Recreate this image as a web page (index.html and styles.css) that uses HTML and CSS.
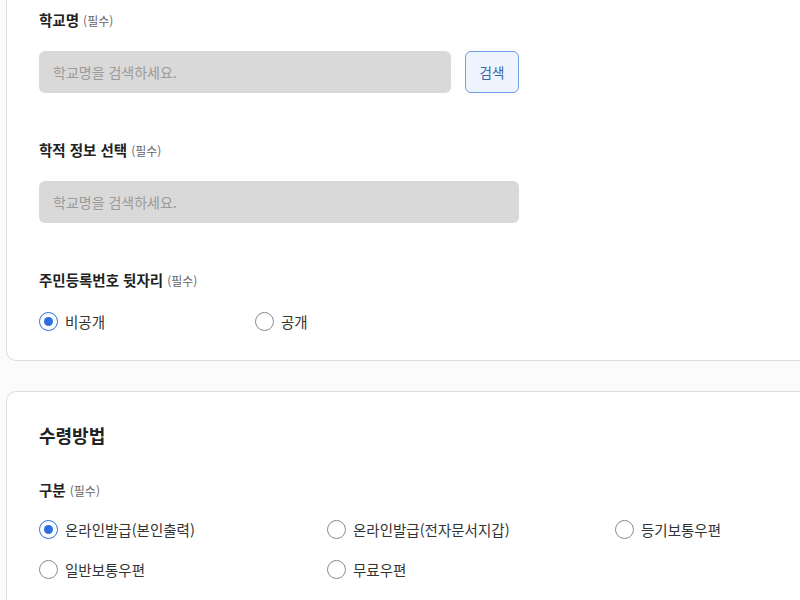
FILE: index.html
```html
<!DOCTYPE html>
<html lang="ko">
<head>
<meta charset="utf-8">
<link rel="stylesheet" href="styles.css">
</head>
<body>
<div class="page">
  <section class="card card-top">
    <div class="field">
      <div class="label">학교명 <span class="req">(필수)</span></div>
      <div class="search-row">
        <div class="input w-short">학교명을 검색하세요.</div>
        <button class="btn">검색</button>
      </div>
    </div>
    <div class="field">
      <div class="label">학적 정보 선택 <span class="req">(필수)</span></div>
      <div class="input w-long">학교명을 검색하세요.</div>
    </div>
    <div class="field">
      <div class="label">주민등록번호 뒷자리 <span class="req">(필수)</span></div>
      <div class="radios radios-2">
        <label class="radio"><span class="dot checked"></span>비공개</label>
        <label class="radio"><span class="dot"></span>공개</label>
      </div>
    </div>
  </section>
  <section class="card card-bottom">
    <h2 class="title">수령방법</h2>
    <div class="field">
      <div class="label">구분 <span class="req">(필수)</span></div>
      <div class="radios radios-3">
        <label class="radio"><span class="dot checked"></span>온라인발급(본인출력)</label>
        <label class="radio"><span class="dot"></span>온라인발급(전자문서지갑)</label>
        <label class="radio"><span class="dot"></span>등기보통우편</label>
        <label class="radio"><span class="dot"></span>일반보통우편</label>
        <label class="radio"><span class="dot"></span>무료우편</label>
      </div>
    </div>
  </section>
</div>
</body>
</html>
```
FILE: styles.css
```css
html, body {
  margin: 0;
  padding: 0;
  background: #fbfbfb;
  overflow: hidden;
  font-family: "Noto Sans CJK KR", "Noto Sans", sans-serif;
  color: #222;
}
.page {
  padding-left: 6px;
  width: 794px;
  overflow: hidden;
}
.card {
  background: #fff;
  border: 1px solid #dcdcdc;
  border-right: none;
  border-radius: 10px 0 0 10px;
  padding: 0 32px;
}
.card-top {
  margin-top: -30px;
  padding-top: 39px;
  padding-bottom: 29px;
  display: flex;
  flex-direction: column;
  gap: 47px;
}
.card-bottom {
  margin-top: 30px;
  padding-top: 30px;
  padding-bottom: 40px;
}
.field {
  display: flex;
  flex-direction: column;
  gap: 21px;
}
.label {
  font-size: 14.5px;
  font-weight: 700;
  line-height: 20px;
  height: 20px;
}
.req {
  font-size: 12px;
  font-weight: 400;
  color: #666;
}
.search-row {
  display: flex;
  gap: 14px;
}
.input {
  box-sizing: border-box;
  height: 42px;
  background: #d9d9d9;
  border-radius: 6px;
  padding: 0 14px;
  font-size: 14px;
  line-height: 42px;
  color: #9a9a9a;
}
.w-short { width: 412px; }
.w-long { width: 480px; }
.btn {
  box-sizing: border-box;
  width: 54px;
  height: 42px;
  border: 1px solid #6f9be0;
  background: #eef4fd;
  border-radius: 6px;
  color: #3a64a8;
  font-family: inherit;
  font-size: 13.5px;
  padding: 0;
}
.title {
  margin: 0 0 32px;
  font-size: 18px;
  font-weight: 700;
  line-height: 26px;
}
.card-bottom .field { gap: 19px; }
.radios {
  display: grid;
  row-gap: 20px;
}
.radios-2 { grid-template-columns: 216px 216px; }
.radios-3 { grid-template-columns: 288px 288px 288px; }
.radio {
  display: flex;
  align-items: center;
  gap: 7px;
  height: 20px;
  font-size: 14.5px;
  color: #333;
}
.dot {
  box-sizing: border-box;
  width: 19px;
  height: 19px;
  border-radius: 50%;
  border: 1px solid #8a8a8a;
  background: #fff;
  display: flex;
  align-items: center;
  justify-content: center;
  flex: none;
}
.dot.checked {
  border: 1.5px solid #2d6ee0;
}
.dot.checked::after {
  content: "";
  width: 9px;
  height: 9px;
  border-radius: 50%;
  background: #2d6ee0;
}
```
